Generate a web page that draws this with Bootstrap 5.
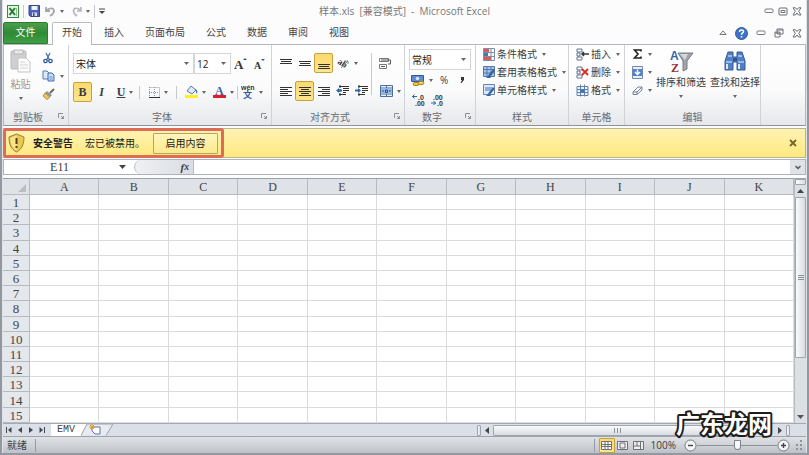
<!DOCTYPE html>
<html lang="zh-CN">
<head>
<meta charset="utf-8">
<meta name="viewport" content="width=device-width, initial-scale=1">
<title>样本.xls - Microsoft Excel</title>
<link rel="stylesheet" href="https://cdn.jsdelivr.net/npm/bootstrap@5.3.0/dist/css/bootstrap.min.css">
<style>
:root{--line:#a9aeb5;--ink:#3a3d42;--gold:#c9a03a}
body{font:10px/14px "Open Sans","Noto Sans CJK SC",sans-serif;color:var(--ink);background:#fcfcfd}
.window{height:100vh;min-height:400px;border:solid #9297a0;border-width:0 2px 2px;box-shadow:inset 1px 0 #dfe2e6,inset -1px 0 #dfe2e6;padding:0 1px;overflow:hidden}
button,select,input{font:inherit;color:inherit}
button{background:none;border:0;padding:0;display:inline-flex;align-items:center;justify-content:center;white-space:nowrap}
svg{display:block;flex:none}
.caret{flex:none;width:0;height:0;border:solid transparent;border-width:3px 2px 0;border-top-color:#666}
.titlebar{display:grid;grid-template-columns:1fr auto 1fr;height:22px;color:#777;align-items:center}
.vsep{width:1px;height:13px;background:#c6c9ce;flex:none}
.tabs{height:22px}
.tabs a{color:#444;text-decoration:none;padding:3px 11px 0 10px;height:22px;white-space:nowrap}
.tabs a.file-tab{color:#fff;background:linear-gradient(#4a9e4c,#2f8a35 50%,#3fa044);border:1px solid #2c7a32;padding:2px 0 0;text-align:center;border-radius:2px 2px 0 0;width:45px;margin-right:4px}
.tabs a.current{background:#fff;border:1px solid #b9bdc3;border-bottom:0;padding:2px 9px 0;border-radius:2px 2px 0 0;height:23px;position:relative;z-index:1;margin-right:2px}
.ribbon{height:82px;border:1px solid #b4b8be;border-bottom-color:#8f949b;background:linear-gradient(#fff,#fbfbfc 55%,#e6e8eb)}
.group{border-right:1px solid #cfd2d6;display:flex;flex-direction:column;flex:none}
.group-body{height:64px}
.group-name{color:#666b73;text-align:center;position:relative;line-height:16px;height:16px}
.launch{position:absolute;right:4px;top:4px}
.g-clip{width:65px}.g-font{width:203px}.g-align{width:133px}.g-num{width:71px}.g-style{width:93px}.g-cell{width:56px}.g-edit{width:136px}
.g-style .group-body,.g-cell .group-body,.g-edit .group-body{padding-left:7px}
.tool{height:20px;width:19px;border:1px solid transparent;border-radius:2px}
.tool.wide{width:28px;gap:4px}
.tool.on,.view.on{background:linear-gradient(#fbd96f,#fde58c);border-color:var(--gold)}
.combo{appearance:none;border:1px solid #d3d5d9;border-radius:0;height:21px;padding:0 2px;color:#222;background:#fff url("data:image/svg+xml,%3Csvg xmlns='http://www.w3.org/2000/svg' width='5' height='3'%3E%3Cpath d='M0 0h5L2.5 3z' fill='%23666'/%3E%3C/svg%3E") no-repeat right 4px center}
.line{height:18px;justify-content:flex-start;gap:2px}
.line .caret{margin-left:3px}
.big{flex-direction:column;justify-content:flex-start;height:56px}
.big .caret{margin-top:6px}
.notice{height:30px;margin-top:2px;background:linear-gradient(#fff3b4,#ffe97f);border:1px solid #b9b48f;border-left:0;color:#222}
.marked{border:3px solid #df6a56;border-radius:3px;width:221px;height:30px;padding-left:2px}
.enable{border:1px solid #b9a45c;width:65px;height:21px;background:linear-gradient(#fff5bd,#fdea8c);border-radius:1px}
.formula{height:16px;margin-top:1px;border:1px solid #aeb3ba;background:#fff}
.namebox,.fx-input{border:0;outline:0;background:#fff;height:14px;padding:0;min-width:0}
.namebox{width:111px;text-align:center;font:12px/14px "Liberation Serif","Noto Sans CJK SC",serif}
.fx{background:linear-gradient(90deg,#eff1f3,#d9dce2);border-radius:8px 0 0 8px;width:60px;border-left:1px solid #b9bdc4;border-right:1px solid #b9bdc4;font:italic bold 11px/14px "Liberation Serif",serif}
.sheet-area{margin-top:3px;border-top:1px solid #9da2aa;background:#fff;min-height:0}
.sheet{table-layout:fixed;width:100%;height:100%;border-collapse:separate;border-spacing:0;font:13px/13px "Liberation Serif",serif;color:#444}
.sheet td{border:solid #d9dbde;border-width:0 1px 1px 0;padding:0}
.sheet th{font-weight:400;text-align:center;background:#dfe2e7;border:solid #b6bbc2;border-width:0 1px 1px 0;padding:0}
.sheet thead th{height:16px;font-size:12px;padding-top:1px}
.sheet .corner{width:27px}
.sheet tbody th{background:#e4e7eb;padding-top:1px}
.corner svg{margin:2px 3px 0 auto}
.vscroll{width:12px;background:#dcdfe4;border-left:1px solid #b6bbc2;flex:none}
.thumb{border:1px solid #9fa5ae;background:linear-gradient(90deg,#fafbfc,#d8dce2);border-radius:1px}
.vthumb{height:66%}
.sheetbar{height:13px;background:#dbe0e8;border-top:1px solid #a4a9b1}
.sheetbar .step{width:11px}
.sheet-tab{background:#fff;width:30px;height:12px;font:10px/12px "Liberation Mono",monospace;color:#444;text-decoration:none;text-align:center}
.hscroll{width:41%}
.hthumb{height:11px;width:250px;background:linear-gradient(#fafbfc,#d8dce2)}
.status{height:17px;border-top:1px solid #9fa4ac;background:linear-gradient(#e0e2e5,#bec2c8)}
.status .vsep{background:#969ba4}
.view{width:16px;height:15px;border:1px solid transparent;border-radius:1px}
.zoom-range{appearance:none;background:linear-gradient(#8e939b,#8e939b) center/100% 1px no-repeat;width:80px;height:13px;margin:0}
.zoom-range::-webkit-slider-thumb{appearance:none;width:7px;height:10px;background:#f7f8f9;border:1px solid #7e848d;border-radius:1px 1px 4px 4px}
.watermark{position:absolute;right:32px;bottom:10px}
</style>
<script src="https://cdn.jsdelivr.net/npm/bootstrap@5.3.0/dist/js/bootstrap.bundle.min.js"></script>
</head>
<body>
<svg width="0" height="0" class="position-absolute" aria-hidden="true">
  <symbol id="launcher" viewBox="0 0 6 6"><path d="M.5 5V.5H5M3 3l2.500 2.500M5.500 3v2.500H3" fill="none" stroke="#8b9098"/></symbol>
  <symbol id="min" viewBox="0 0 10 6"><rect x="1" y="1" width="8" height="3.500" rx="1" fill="#fff" stroke="#777b82"/></symbol>
  <symbol id="close" viewBox="0 0 10 9"><path d="M1 .8h2.500L5 2.500 6.500.8H9L6.700 4.300 9 8H6.500L5 6 3.500 8H1l2.300-3.700z" fill="#fff" stroke="#666b73"/></symbol>
  <symbol id="cells" viewBox="0 0 13 13"><path d="M1 1h5v3H1zM1 5h3v3H1zM1 9h5v3H1z" fill="#fff" stroke="#65758d"/></symbol>
</svg>
<div class="window d-flex flex-column">
  <header class="titlebar">
    <div class="d-flex align-items-center">
      <svg class="ms-1" width="12" height="13" viewBox="0 0 12 13"><rect x=".5" y=".5" width="11" height="12" fill="#e9f4e8" stroke="#348a3d"/><path d="M2.500 3 8 10M8 3l-5.500 7" stroke="#1d7d2b" stroke-width="2"/><path d="M9.500 3v8" stroke="#8cbd8f"/></svg>
      <span class="vsep ms-1 me-1"></span>
      <button aria-label="保存"><svg width="13" height="12" viewBox="0 0 13 12"><path d="M1 .5h10.500v11H2.500L1 10z" fill="#4e63b6" stroke="#37488f"/><path d="M3.500 1h6v4h-6z" fill="#eef2fb"/><path d="M4 7.500h5V11H4z" fill="#d5dcf1"/><path d="M5 8h1.500v3H5z" fill="#37488f"/></svg></button>
      <button class="ms-1" aria-label="撤消"><svg width="11" height="11" viewBox="0 0 11 11"><path d="M1 1v4h4M1.500 4.500C4 1.500 9 1.500 9 5c0 2-1.500 3.500-4 5" fill="none" stroke="#a3a6ab" stroke-width="1.800"/></svg><span class="caret ms-1"></span></button>
      <button class="ms-2" aria-label="恢复"><svg width="10" height="11" viewBox="0 0 10 11"><path d="M9 1v4H5M8.500 4.500C6 1.500 1.500 1.500 1.500 5c0 2 1 3.500 3.500 5" fill="none" stroke="#b2b5b9" stroke-width="1.600"/></svg><span class="caret ms-1"></span></button>
      <span class="vsep ms-1 me-1"></span>
      <button aria-label="自定义快速访问工具栏"><svg width="6" height="7" viewBox="0 0 6 7"><path d="M0 1h6" stroke="#444"/><path d="M0 3h6L3 6z" fill="#444"/></svg></button>
    </div>
    <div class="text-nowrap">样本.xls&nbsp; [兼容模式] &nbsp;-&nbsp; Microsoft Excel</div>
    <div class="d-flex justify-content-end align-items-center gap-1">
      <button aria-label="最小化"><svg width="10" height="6"><use href="#min"/></svg></button>
      <button aria-label="还原"><svg width="10" height="9" viewBox="0 0 10 9"><rect x="1" y="1" width="8" height="7" rx="1" fill="#fff" stroke="#666b73"/><path d="M3 3.500h4v2H3z" fill="none" stroke="#777"/></svg></button>
      <button class="me-1" aria-label="关闭"><svg width="10" height="9"><use href="#close"/></svg></button>
    </div>
  </header>
  <nav class="tabs d-flex" aria-label="功能区">
    <a class="file-tab" href="#">文件</a><a class="current" href="#">开始</a><a href="#">插入</a><a href="#">页面布局</a><a href="#">公式</a><a href="#">数据</a><a href="#">审阅</a><a href="#">视图</a>
    <div class="d-flex align-items-center ms-auto gap-2 pe-1">
      <button aria-label="折叠功能区"><svg width="8" height="6" viewBox="0 0 8 6"><path d="M.8 4.500 4 1l3.200 3.500z" fill="#fff" stroke="#70757d"/></svg></button>
      <button aria-label="帮助"><svg width="13" height="13" viewBox="0 0 13 13"><circle cx="6.500" cy="6.500" r="6" fill="#3f74c5" stroke="#315c9f"/><path d="M4.500 5c0-3 4.300-2.500 4-.3C8.300 6 6.500 6 6.500 7.800M6.500 9v1.500" fill="none" stroke="#fff" stroke-width="1.500"/></svg></button>
      <button aria-label="最小化窗口"><svg width="10" height="6"><use href="#min"/></svg></button>
      <button aria-label="还原窗口"><svg width="10" height="10" viewBox="0 0 10 10"><path d="M3 1h6v5H3zM1 4h5v5H1z" fill="#fff" stroke="#70757d"/><path d="M3 2h6M1 5h5" stroke="#70757d"/></svg></button>
      <button aria-label="关闭窗口"><svg width="10" height="9"><use href="#close"/></svg></button>
    </div>
  </nav>

  <section class="ribbon d-flex flex-shrink-0">
    <div class="group g-clip">
      <div class="group-body d-flex justify-content-between ps-1 pe-1 pt-1">
        <button class="big" style="color:#999"><svg width="25" height="28" viewBox="0 0 25 28"><rect x="3" y="2" width="15" height="18" rx="1" fill="#cfcfd2" stroke="#bbb"/><path d="M6 1h9v4H6z" fill="#e9e9ea" stroke="#b5b5b8"/><path d="M10 9h8l4 4v10H10z" fill="#fbfbfb" stroke="#c3c3c6"/><path d="M12 13h5M12 16h8M12 19h8" stroke="#d3d3d6"/></svg>粘贴<span class="caret"></span></button>
        <div class="d-flex flex-column align-items-start">
          <button class="line" aria-label="剪切"><svg width="12" height="12" viewBox="0 0 12 12"><path d="M4 1l3.500 7M8 1 4.500 8" stroke="#4b6ea8" stroke-width="1.300"/><circle cx="3.500" cy="9" r="1.700" fill="#fff" stroke="#2e5a9e" stroke-width="1.300"/><circle cx="8.500" cy="9" r="1.700" fill="#fff" stroke="#2e5a9e" stroke-width="1.300"/></svg></button>
          <button class="line" aria-label="复制"><svg width="13" height="12" viewBox="0 0 13 12"><path d="M1 1h4l2 2v6H1z" fill="#dbe8f8" stroke="#4f7ab4"/><path d="M6 3h4l2 2v6H6z" fill="#c8dcf4" stroke="#3f6cab"/><path d="M7.500 7h3M7.500 9h3" stroke="#6e93c5"/></svg><span class="caret"></span></button>
          <button class="line" aria-label="格式刷"><svg width="13" height="12" viewBox="0 0 13 12"><path d="M12 1 8 5" stroke="#77664e" stroke-width="2"/><path d="M5 3l5 4-2 2-5-4z" fill="#8a94a7"/><path d="M3 5l5 4-3 2.500L1 8z" fill="#eac75b" stroke="#b6913a"/></svg></button>
        </div>
      </div>
      <div class="group-name pe-3">剪贴板<svg class="launch" width="6" height="6"><use href="#launcher"/></svg></div>
    </div>
    <div class="group g-font">
      <div class="group-body pt-2 ps-1">
        <div class="d-flex align-items-center">
          <select class="combo" style="width:121px" aria-label="字体"><option>宋体</option></select><select class="combo" style="width:37px" aria-label="字号"><option>12</option></select>
          <button class="tool" aria-label="增大字号"><svg width="13" height="14" viewBox="0 0 13 14"><text x="0" y="12" font-family="Liberation Serif" font-weight="700" font-size="13" fill="#333">A</text><path d="M9 3l2-2 2 2z" fill="#2d5ba0"/></svg></button>
          <button class="tool" aria-label="减小字号"><svg width="11" height="14" viewBox="0 0 11 14"><text x="0" y="12" font-family="Liberation Serif" font-weight="700" font-size="10" fill="#333">A</text><path d="M7 2h4L9 4z" fill="#2d5ba0"/></svg></button>
        </div>
        <div class="d-flex align-items-center mt-2" style="font-family:'Liberation Serif',serif;font-size:12px">
          <button class="tool on" aria-label="加粗"><b>B</b></button><button class="tool" aria-label="倾斜"><i><b>I</b></i></button><button class="tool wide" aria-label="下划线"><b><u>U</u></b><span class="caret"></span></button>
          <span class="vsep"></span>
          <button class="tool wide ms-1" aria-label="边框"><svg width="11" height="11" viewBox="0 0 11 11"><path d="M.5.500h10v9M.5 0v10M5.500 0v10M0 5.500h10" fill="none" stroke="#92969d" stroke-dasharray="1 1"/><path d="M0 10.500h11" stroke="#333"/></svg><span class="caret"></span></button>
          <span class="vsep ms-1"></span>
          <button class="tool wide ms-1" aria-label="填充颜色"><svg width="13" height="14" viewBox="0 0 13 14"><path d="M2 6 6 1l5 4-4 4z" fill="#dfeaf7" stroke="#5b7ba9"/><path d="M10 4c3 1 2.500 3 2 5-1-1-1-3-2-5z" fill="#356fb5"/><path d="M0 10h13v3H0z" fill="#fff21c"/></svg><span class="caret"></span></button>
          <button class="tool wide" aria-label="字体颜色"><svg width="13" height="14" viewBox="0 0 13 14"><text x="2" y="9.500" font-family="Liberation Serif" font-weight="700" font-size="12" fill="#3b5f9a">A</text><path d="M0 10h13v3H0z" fill="#df1f21"/></svg><span class="caret"></span></button>
          <span class="vsep"></span>
          <button class="tool wide" aria-label="拼音指南"><svg width="14" height="18" viewBox="0 0 14 18"><text x="0" y="7" font-family="Liberation Sans" font-weight="700" font-size="7" fill="#333">wén</text><text x="2" y="15" font-family="Noto Sans CJK SC" font-size="9" font-weight="700" fill="#315b9f">文</text></svg><span class="caret"></span></button>
        </div>
      </div>
      <div class="group-name pe-3">字体<svg class="launch" width="6" height="6"><use href="#launcher"/></svg></div>
    </div>
    <div class="group g-align">
      <div class="group-body d-flex pt-2 ps-1">
        <div>
          <div class="d-flex align-items-center mb-2">
            <button class="tool" aria-label="顶端对齐"><svg width="12" height="14" viewBox="0 0 12 14"><path d="M0 3.500h12M1 5.500h10M0 7.500h12" stroke="#333"/></svg></button>
            <button class="tool" aria-label="垂直居中"><svg width="12" height="14" viewBox="0 0 12 14"><path d="M0 5.500h12M1 7.500h10M0 9.500h12" stroke="#333"/></svg></button>
            <button class="tool on" aria-label="底端对齐"><svg width="12" height="14" viewBox="0 0 12 14"><path d="M0 8.500h12M1 10.500h10M0 12.500h12" stroke="#333"/></svg></button>
            <button class="tool wide" aria-label="方向"><svg width="14" height="12" viewBox="0 0 14 12"><text x="1" y="6" transform="rotate(35 1 6)" font-family="Liberation Serif" font-size="9" font-weight="700" fill="#333">ab</text><path d="M5 11l7-7M12 7V4H9" fill="none" stroke="#888"/></svg><span class="caret"></span></button>
          </div>
          <div class="d-flex align-items-center">
            <button class="tool" aria-label="文本左对齐"><svg width="12" height="11" viewBox="0 0 12 11"><path d="M0 1.500h12M0 3.500h8M0 5.500h12M0 7.500h8M0 9.500h12" stroke="#333"/></svg></button>
            <button class="tool on" aria-label="居中"><svg width="12" height="11" viewBox="0 0 12 11"><path d="M0 1.500h12M2 3.500h8M0 5.500h12M2 7.500h8M0 9.500h12" stroke="#333"/></svg></button>
            <button class="tool" aria-label="文本右对齐"><svg width="12" height="11" viewBox="0 0 12 11"><path d="M0 1.500h12M4 3.500h8M0 5.500h12M4 7.500h8M0 9.500h12" stroke="#333"/></svg></button>
            <button class="tool" aria-label="减少缩进量"><svg width="13" height="12" viewBox="0 0 13 12"><path d="M3 1.500h10M7 3.500h6M7 5.500h6M7 7.500h3M3 9.500h7" stroke="#333"/><path d="M4 0v12" stroke="#333" stroke-dasharray="1 1"/><path d="M3 3v5L0 5.500z" fill="#2d69b3"/><path d="M2 5.500h4" stroke="#2d69b3" stroke-width="2"/></svg></button>
            <button class="tool" aria-label="增加缩进量"><svg width="13" height="12" viewBox="0 0 13 12"><path d="M3 1.500h10M7 3.500h6M7 5.500h6M7 7.500h3M3 9.500h7" stroke="#333"/><path d="M4 0v12" stroke="#333" stroke-dasharray="1 1"/><path d="M3 3v5l3-2.500z" fill="#2d69b3"/><path d="M0 5.500h4" stroke="#2d69b3" stroke-width="2"/></svg></button>
          </div>
        </div>
        <span class="vsep h-75 me-1"></span>
        <div class="d-flex flex-column gap-2 align-items-start">
          <button class="tool" aria-label="自动换行"><svg width="13" height="13" viewBox="0 0 13 13"><path d="M.5 1.500h9v3h-9zM.5 7.500h7v4h-7z" fill="#fff" stroke="#777"/><path d="M2 3h9.500v4H9M2 9.500h4" fill="none" stroke="#555"/></svg></button>
          <button class="tool wide" aria-label="合并后居中"><svg width="13" height="12" viewBox="0 0 13 12"><path d="M.5.500h12v11H.5zM.5 3h12M.5 9h12M6.500.500V3M6.500 9v2.500" fill="#eaf1fa" stroke="#4d6d9d"/><path d="M1 3.500h11v5H1z" fill="#9bbbe4"/><path d="M2 6h2M9 6h2M5.500 5h2v2.500h-2z" stroke="#234d8c" fill="none"/></svg><span class="caret"></span></button>
        </div>
      </div>
      <div class="group-name pe-3">对齐方式<svg class="launch" width="6" height="6"><use href="#launcher"/></svg></div>
    </div>
    <div class="group g-num">
      <div class="group-body px-1 pt-1">
        <select class="combo w-100" aria-label="数字格式"><option>常规</option></select>
        <div class="d-flex align-items-center">
          <button class="tool wide" aria-label="会计数字格式"><svg width="14" height="13" viewBox="0 0 14 13"><path d="M.5 1.500h12v6H.5z" fill="#618bd0" stroke="#335c9f"/><circle cx="6.500" cy="4.500" r="1.800" fill="#d5e2f5"/><ellipse cx="5" cy="10" rx="3" ry="1.700" fill="#efc943" stroke="#a48226"/><ellipse cx="10" cy="9" rx="3" ry="1.700" fill="#f3d45c" stroke="#a48226"/></svg><span class="caret"></span></button>
          <button class="tool" aria-label="百分比样式">%</button><button class="tool" aria-label="千位分隔样式"><svg width="4" height="6" viewBox="0 0 4 6"><path d="M1 0h3v3L1.500 6H.5L2 3H1z" fill="#333"/></svg></button>
        </div>
        <div class="d-flex align-items-center">
          <button class="tool" aria-label="增加小数位数"><svg width="13" height="12" viewBox="0 0 13 12"><path d="M0 2.500h5M2.500.500l-2 2 2 2" fill="none" stroke="#2b64ad"/><text x="6" y="5.500" font-family="Liberation Sans" font-size="7" font-weight="700" fill="#333">.0</text><text x="3" y="11.500" font-family="Liberation Sans" font-size="7" font-weight="700" fill="#333">.00</text></svg></button>
          <button class="tool" aria-label="减少小数位数"><svg width="13" height="12" viewBox="0 0 13 12"><path d="M0 9h5M2.500 7l2 2-2 2" fill="none" stroke="#2b64ad"/><text x="2" y="5.500" font-family="Liberation Sans" font-size="7" font-weight="700" fill="#333">.00</text><text x="6" y="11.500" font-family="Liberation Sans" font-size="7" font-weight="700" fill="#333">.0</text></svg></button>
        </div>
      </div>
      <div class="group-name pe-3">数字<svg class="launch" width="6" height="6"><use href="#launcher"/></svg></div>
    </div>
    <div class="group g-style">
      <div class="group-body d-flex flex-column align-items-start">
        <button class="line"><svg width="12" height="13" viewBox="0 0 12 13"><path d="M.5.500h11v12H.5zM4 .5v12M8 .5v12M.5 4.500h11M.5 8.500h11" fill="#f5f7fb" stroke="#7c8eaa"/><path d="M1 1h5v3H1zM1 9h7v3H1z" fill="#d45c59"/><path d="M1 5h4v3H1z" fill="#4a75b8"/></svg>条件格式<span class="caret"></span></button>
        <button class="line"><svg width="12" height="13" viewBox="0 0 12 13"><path d="M.5.500h11v10H.5zM4 .5v10M8 .5v10M.5 3.500h11M.5 7h11" fill="#a9c4ea" stroke="#5579ae"/><path d="M11 4 6 10" stroke="#3a5f96" stroke-width="2"/><path d="M6 9l-3 3h5z" fill="#2f66b8"/></svg>套用表格格式<span class="caret"></span></button>
        <button class="line"><svg width="12" height="13" viewBox="0 0 12 13"><path d="M.5.500h11v10H.5z" fill="#e0eaf7" stroke="#6883ab"/><path d="M2 3h8v4H2z" fill="#8aaee0"/><path d="M11 4 6 10" stroke="#3a5f96" stroke-width="2"/><path d="M6 9l-3 3h5z" fill="#2f66b8"/></svg>单元格样式<span class="caret"></span></button>
      </div>
      <div class="group-name">样式</div>
    </div>
    <div class="group g-cell">
      <div class="group-body d-flex flex-column align-items-start">
        <button class="line"><svg width="13" height="13" viewBox="0 0 13 13"><use href="#cells"/><path d="M13 6H6M8 4 6 6l2 2" fill="none" stroke="#333" stroke-width="1.500"/></svg>插入<span class="caret"></span></button>
        <button class="line"><svg width="13" height="13" viewBox="0 0 13 13"><use href="#cells"/><path d="M6 3l6 6M12 3 6 9" stroke="#d92a28" stroke-width="1.800"/></svg>删除<span class="caret"></span></button>
        <button class="line"><svg width="13" height="13" viewBox="0 0 13 13"><path d="M1 2.500h11v9H1zM4.500.500v12M8.500.500v12M1 5.500h11M1 8.500h11" fill="#edf2f9" stroke="#6481ad"/><path d="M4.500 5.500h4v3h-4z" fill="#3d73bd"/></svg>格式<span class="caret"></span></button>
      </div>
      <div class="group-name">单元格</div>
    </div>
    <div class="group g-edit">
      <div class="group-body d-flex">
        <div class="d-flex flex-column align-items-start">
          <button class="line" aria-label="自动求和"><svg width="11" height="12" viewBox="0 0 11 12"><path d="M9 3.500V2H2.500l3.500 4-3.500 4H9V8.500" fill="none" stroke="#222" stroke-width="1.600"/></svg><span class="caret"></span></button>
          <button class="line" aria-label="填充"><svg width="11" height="13" viewBox="0 0 11 13"><path d="M.5.500h10v12H.5z" fill="#e9f0fa" stroke="#7289ad"/><path d="M1 3h9v7H1z" fill="#4f83cc"/><path d="M5.500 3.500V8M3 6l2.500 2.500L8 6" fill="none" stroke="#fff" stroke-width="1.500"/></svg><span class="caret"></span></button>
          <button class="line" aria-label="清除"><svg width="11" height="11" viewBox="0 0 11 11"><path d="M1 7 6 2h4v3L5 9.500H1z" fill="#f5f7fa" stroke="#758194"/><path d="M1 7h4l5-5M5 7v2.500" fill="none" stroke="#758194"/></svg><span class="caret"></span></button>
        </div>
        <button class="big pt-1 ms-1"><svg width="26" height="26" viewBox="0 0 26 26"><text x="2" y="11" font-family="Liberation Sans" font-weight="700" font-size="12" fill="#3267af">A</text><text x="3" y="23" font-family="Liberation Serif" font-weight="700" font-size="12" fill="#9c3130">Z</text><path d="M10 4h15l-6 8v8l-4 2V12z" fill="#a1a5ab" stroke="#777c84"/><path d="M12 5h8l-3 6z" fill="#d3d6da"/></svg>排序和筛选<span class="caret"></span></button>
        <button class="big pt-1 ms-1"><svg width="24" height="26" viewBox="0 0 24 26"><path d="M5 3h5v5h4V3h5l3 9v9h-8v-8h-4v8H2v-9z" fill="#527fc5" stroke="#345a95"/><path d="M5 7h4M15 7h4M3 13h6M15 13h6" stroke="#9abbe9" stroke-width="2"/><path d="M4 15v5M16 15v5" stroke="#dbe9fc" stroke-width="2"/><path d="M10 9h4v3h-4z" fill="#2e5291"/></svg>查找和选择<span class="caret"></span></button>
      </div>
      <div class="group-name">编辑</div>
    </div>
  </section>

  <div class="notice d-flex align-items-center flex-shrink-0" role="alert">
    <div class="marked d-flex align-items-center">
      <svg width="17" height="20" viewBox="0 0 17 20"><path d="M8.500 1 16 4c0 7-2 12-7.500 15C3 16 1 11 1 4z" fill="#e9c94f" stroke="#98813c"/><path d="M8.500 2.500v15C4 15 2.500 10 2.500 5z" fill="#f7e58f"/><path d="M8.500 5v6M8.500 13v2" stroke="#51431c" stroke-width="2"/></svg>
      <b class="ms-2">安全警告</b><span class="ms-2 ps-1">宏已被禁用。</span>
      <button class="enable ms-2">启用内容</button>
    </div>
    <button class="ms-auto me-2" aria-label="关闭消息"><svg width="8" height="8" viewBox="0 0 8 8"><path d="M1 1l6 6M7 1 1 7" stroke="#77652a" stroke-width="1.800"/></svg></button>
  </div>

  <div class="formula d-flex flex-shrink-0">
    <input class="namebox" aria-label="名称框" value="E11">
    <button class="px-1 me-1" aria-label="名称列表"><svg width="7" height="4" viewBox="0 0 7 4"><path d="M0 0h7L3.500 4z" fill="#444"/></svg></button>
    <button class="fx justify-content-end pe-1" aria-label="插入函数"><i>f</i><small>x</small></button>
    <input class="fx-input flex-grow-1" aria-label="编辑栏">
    <button class="px-1 border-start" style="background:#dfe2e7" aria-label="展开编辑栏"><svg width="6" height="5" viewBox="0 0 6 5"><path d="M.5 1 3 3.500 5.500 1" fill="none" stroke="#555" stroke-width="1.500"/></svg></button>
  </div>

  <main class="sheet-area d-flex flex-grow-1">
    <div class="flex-grow-1">
      <table class="sheet">
        <thead><tr id="columns"><th class="corner" aria-label="全选"><svg width="8" height="8"><path d="M8 0v8H0z" fill="#b9bec6"/></svg></th></tr></thead>
        <tbody id="cells-body"></tbody>
      </table>
    </div>
    <div class="vscroll d-flex flex-column align-items-center" aria-hidden="true">
      <div class="thumb w-100" style="height:6px"></div>
      <svg class="my-1" width="7" height="4"><path d="M0 4h7L3.500 0z" fill="#444"/></svg>
      <div class="thumb vthumb w-100 d-flex align-items-center justify-content-center"><svg width="6" height="6"><path d="M0 .5h6M0 2.500h6M0 4.500h6" stroke="#8b9099"/></svg></div>
      <svg class="mt-auto mb-1" width="7" height="4"><path d="M0 0h7L3.500 4z" fill="#555"/></svg>
    </div>
  </main>

  <div class="sheetbar d-flex align-items-center flex-shrink-0">
    <button class="step" aria-label="第一张"><svg width="6" height="6"><path d="M.5 0v6" stroke="#445"/><path d="M5.500 0v6L2 3z" fill="#445"/></svg></button>
    <button class="step" aria-label="上一张"><svg width="4" height="6"><path d="M4 0v6L0 3z" fill="#445"/></svg></button>
    <button class="step" aria-label="下一张"><svg width="4" height="6"><path d="M0 0v6l4-3z" fill="#445"/></svg></button>
    <button class="step me-1" aria-label="最后一张"><svg width="6" height="6"><path d="M5.500 0v6" stroke="#445"/><path d="M.5 0v6L4 3z" fill="#445"/></svg></button>
    <a class="sheet-tab" href="#">EMV</a>
    <button aria-label="插入工作表"><svg width="34" height="12" viewBox="0 0 34 12"><path d="M0 0h6L0 11z" fill="#fff"/><path d="M0 11.500 6 0h26l-7 11.500" fill="#e8ecf2" stroke="#9da4af"/><path d="M11 3h8v7h-5l-3-3z" fill="#fff" stroke="#5b75a2"/><path d="M8 3h6M11 0v6M9 1l4 4M13 1 9 5" stroke="#d99c30"/></svg></button>
    <div class="hscroll d-flex align-items-center ms-auto" aria-hidden="true">
      <span class="thumb" style="width:4px;height:11px"></span>
      <svg class="mx-1" width="4" height="7"><path d="M4 0v7L0 3.500z" fill="#444"/></svg>
      <div class="thumb hthumb d-flex align-items-center justify-content-center"><svg width="7" height="5"><path d="M.5 0v5M3.500 0v5M6.500 0v5" stroke="#8b9099"/></svg></div>
      <svg class="ms-auto me-1" width="4" height="7"><path d="M0 0v7l4-3.500z" fill="#444"/></svg>
      <span class="thumb me-3" style="width:4px;height:11px"></span>
    </div>
  </div>
  <footer class="status d-flex align-items-center flex-shrink-0">
    <span class="px-1">就绪</span><span class="vsep ms-1"></span>
    <span class="vsep ms-auto me-1"></span>
    <button class="view on" aria-label="普通"><svg width="11" height="9"><path d="M.5.500h10v8H.5zM.5 3.500h10M.5 5.500h10M4 .5v8M7 .5v8" fill="#fff" stroke="#6c7079"/></svg></button>
    <button class="view" aria-label="页面布局"><svg width="11" height="9"><path d="M.5.500h10v8H.5zM3 2h5v5H3z" fill="#eee" stroke="#6c7079"/></svg></button>
    <button class="view" aria-label="分页预览"><svg width="11" height="9"><path d="M.5.500h10v8H.5zM.5 5h7M4 .5V5M7.500.500v8" fill="#eee" stroke="#6c7079"/></svg></button>
    <button class="px-1">100%</button>
    <button class="ms-1" aria-label="缩小"><svg width="13" height="13" viewBox="0 0 13 13"><circle cx="6.500" cy="6.500" r="5.500" fill="#f4f5f7" stroke="#747982"/><path d="M4 6.500h5" stroke="#444" stroke-width="1.400"/></svg></button>
    <input class="zoom-range" type="range" min="0" max="100" value="50" aria-label="显示比例">
    <button aria-label="放大"><svg width="13" height="13" viewBox="0 0 13 13"><circle cx="6.500" cy="6.500" r="5.500" fill="#f4f5f7" stroke="#747982"/><path d="M4 6.500h5M6.500 4v5" stroke="#444" stroke-width="1.400"/></svg></button>
    <svg class="ms-1 me-1" width="8" height="10" viewBox="0 0 8 10"><path d="M6 1h2M6 5h2M2 5h2M6 9h2M2 9h2" stroke="#8e939b" stroke-width="2"/></svg>
  </footer>
</div>
<svg class="watermark" width="106" height="40" viewBox="0 0 106 40"><text x="5" y="28" font-family="Noto Sans CJK SC, sans-serif" font-size="24" font-weight="700" fill="#fff" stroke="#1d1d1d" stroke-width="4" stroke-linejoin="round" paint-order="stroke">广东龙网</text></svg>
<script>
const columns = document.getElementById("columns");
for (const name of "ABCDEFGHIJK") {
  const th = document.createElement("th");
  th.scope = "col";
  th.textContent = name;
  columns.append(th);
}
const body = document.getElementById("cells-body");
for (let r = 1; r <= 15; r++) {
  const row = body.insertRow();
  const th = document.createElement("th");
  th.scope = "row";
  th.textContent = r;
  row.append(th);
  for (let c = 0; c < 11; c++) row.insertCell();
}
</script>
</body>
</html>
